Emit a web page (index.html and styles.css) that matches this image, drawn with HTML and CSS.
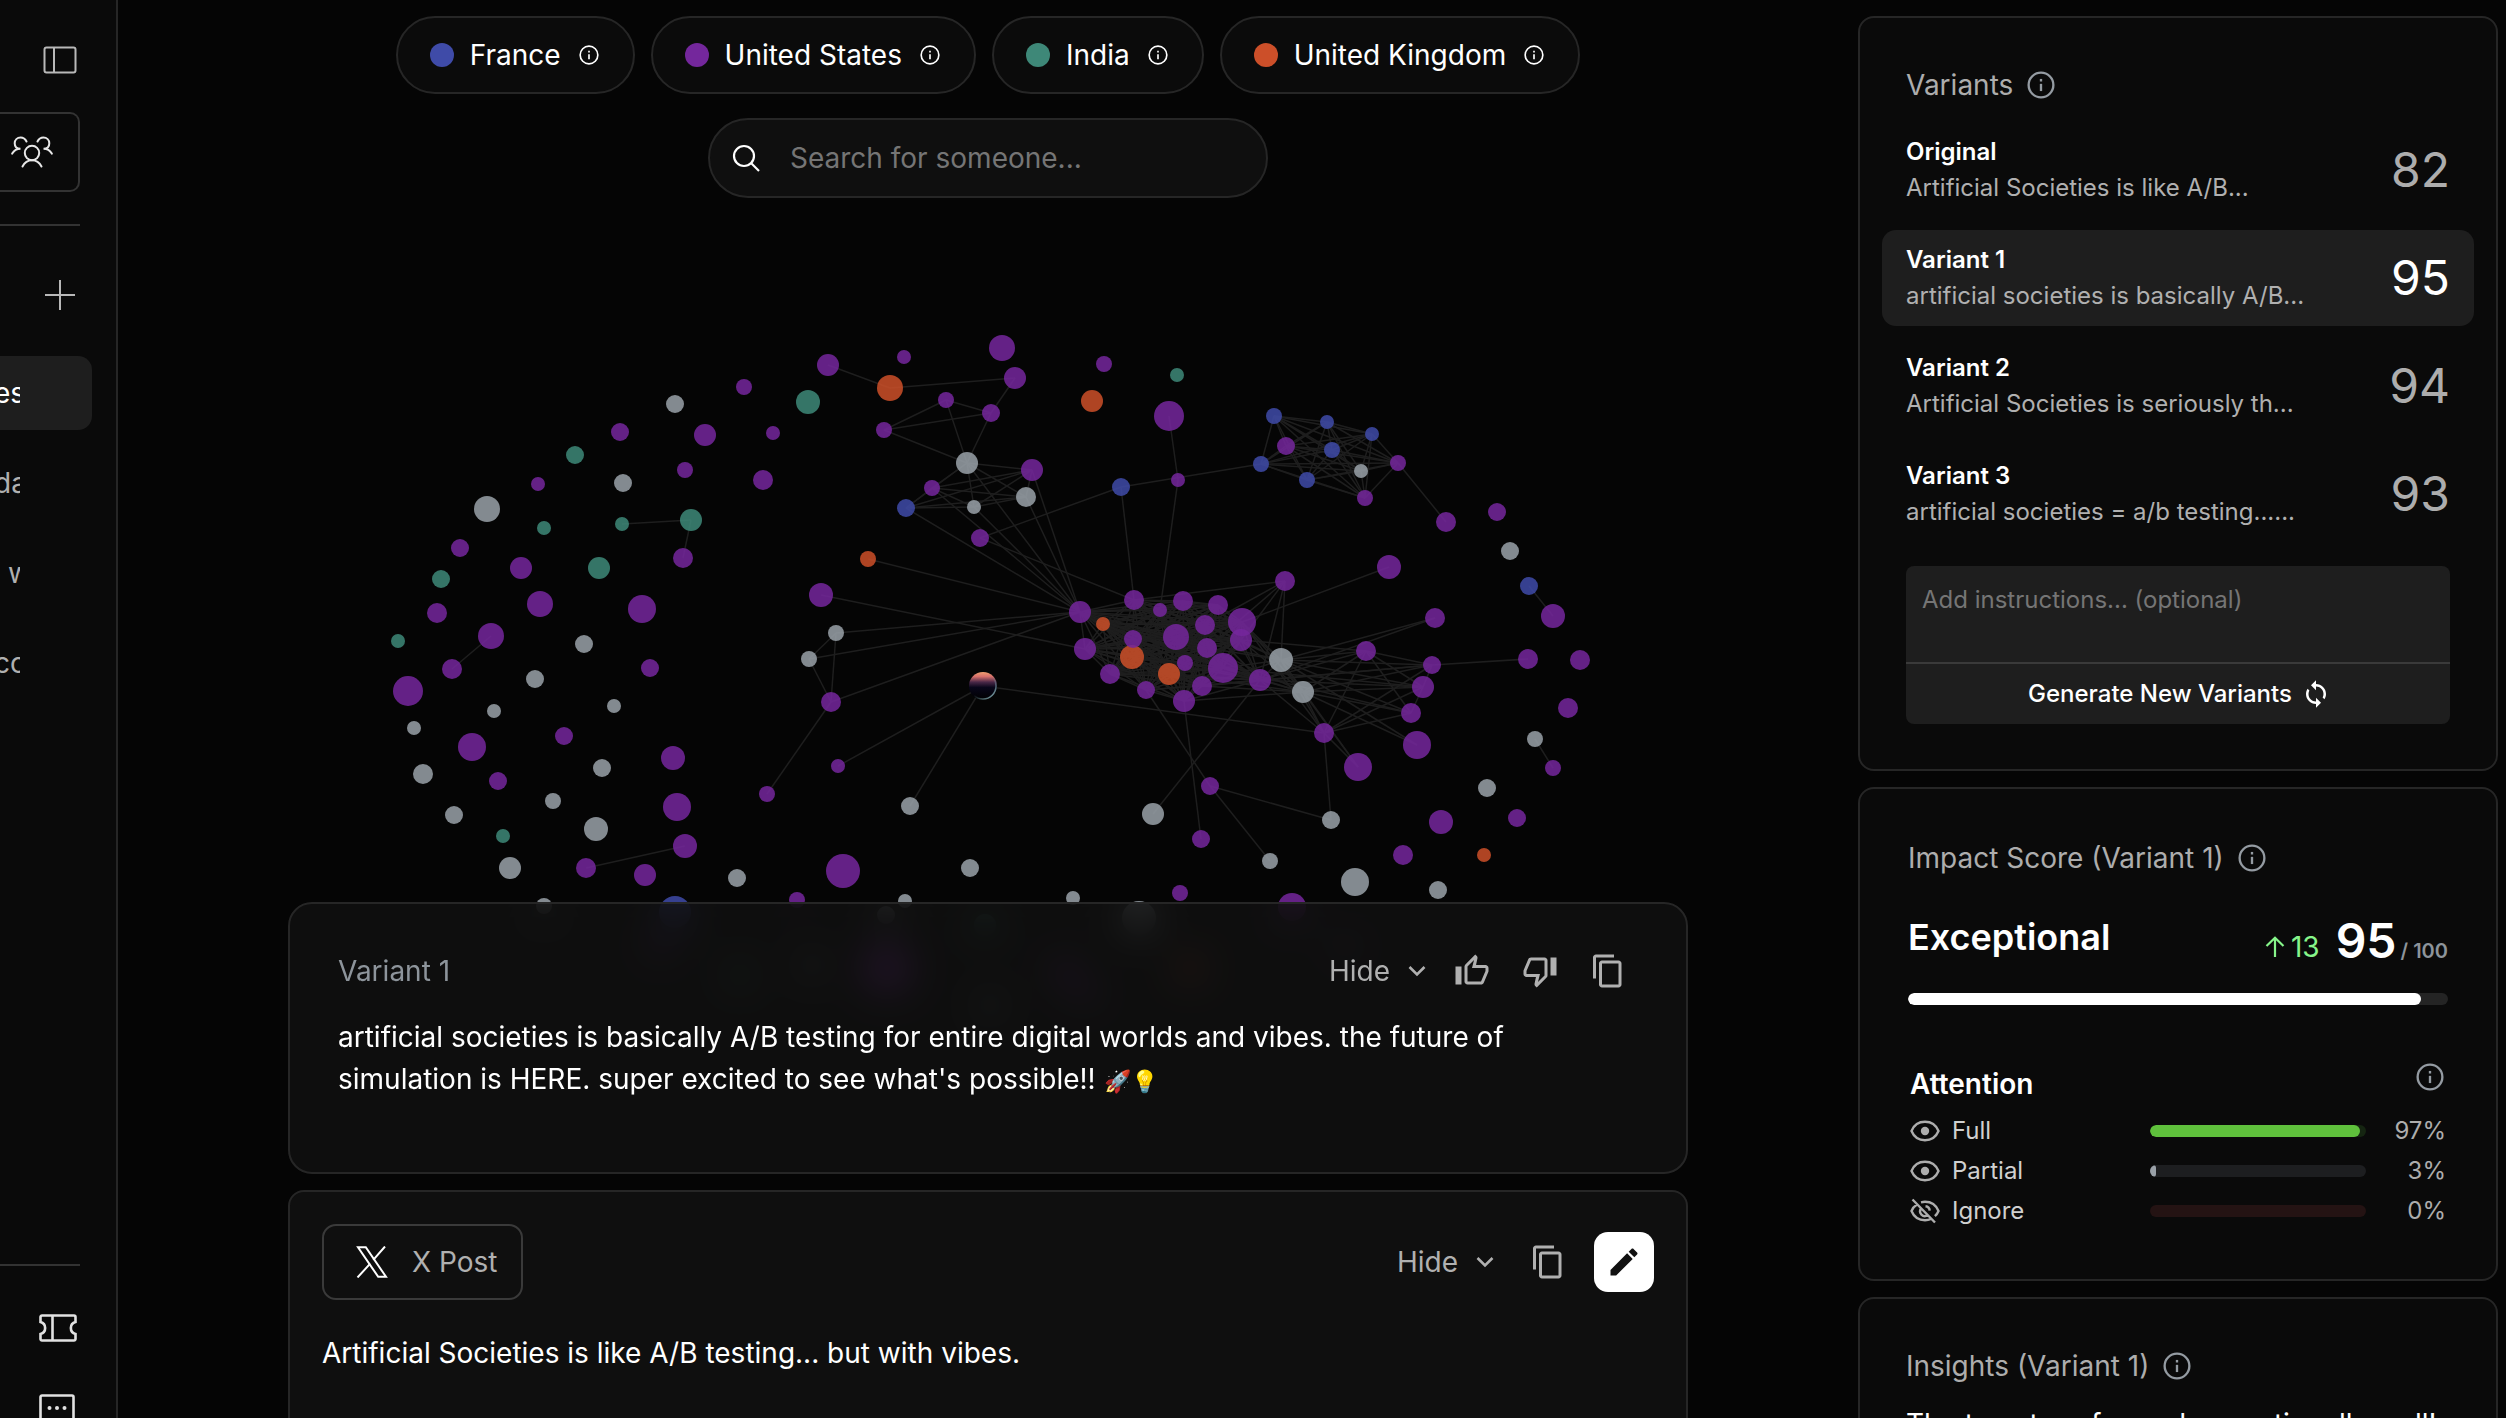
FILE: index.html
```html
<!DOCTYPE html>
<html lang="en">
<head>
<meta charset="utf-8">
<title>Artificial Societies</title>
<link rel="stylesheet" href="styles.css">
</head>
<body>
<svg class="defs" aria-hidden="true">
  <symbol id="info" viewBox="0 0 24 24"><circle cx="12" cy="12" r="10.6" fill="none" stroke="currentColor" stroke-width="2"/><path d="M12 11v6.2" stroke="currentColor" stroke-width="2"/><path d="M12 6.8v2.2" stroke="currentColor" stroke-width="2"/></symbol>
  <symbol id="copy" viewBox="0 0 24 24"><path fill="currentColor" d="M16 1H4c-1.100 0-2 .9-2 2v14h2V3h12V1zm3 4H8c-1.100 0-2 .9-2 2v14c0 1.100.9 2 2 2h11c1.100 0 2-.9 2-2V7c0-1.100-.9-2-2-2zm0 16H8V7h11v14z"/></symbol>
  <symbol id="chevron" viewBox="0 0 18 12"><path d="M1.500 2l7.500 7.500L16.500 2" fill="none" stroke="currentColor" stroke-width="2.600"/></symbol>
  <symbol id="eye" viewBox="0 0 30 22"><path d="M1.500 11C4 5 9 1.800 15 1.800S26 5 28.500 11C26 17 21 20.200 15 20.200S4 17 1.500 11z" fill="none" stroke="currentColor" stroke-width="2.400"/><circle cx="15" cy="11" r="4.200" fill="currentColor"/></symbol>
  <symbol id="eye-off" viewBox="0 0 30 26"><path d="M7 6.500C4.500 8 2.600 10.300 1.500 13c2.500 6 7.500 9.200 13.500 9.200 2.200 0 4.300-.5 6.200-1.300M11 4.300c1.300-.3 2.600-.5 4-.5 6 0 11 3.200 13.500 9.200-.8 2-2 3.700-3.600 5.100M11 10.500a4.800 4.800 0 0 0 6.500 6.800M15.500 8.300a4.800 4.800 0 0 1 4.200 4.400M2.500 1.500l22.500 23" fill="none" stroke="currentColor" stroke-width="2.400"/></symbol>
</svg>
<div class="app">
  <nav class="sidebar" aria-label="Simulations">
    <button class="side-btn collapse" aria-label="Toggle sidebar"><svg width="34" height="28" viewBox="0 0 34 28"><rect x="1.500" y="1.500" width="31" height="25" rx="2" fill="none" stroke="currentColor" stroke-width="2"/><path d="M11 2v24" stroke="currentColor" stroke-width="2"/></svg></button>
    <button class="society" aria-label="Society"><svg width="42" height="32" viewBox="0 0 42 32" fill="none" stroke="currentColor" stroke-width="2" stroke-linecap="round"><circle cx="21" cy="17" r="7.200"/><path d="M11.500 30.500c2-4 5.300-6.200 9.500-6.200s7.500 2.200 9.500 6.200"/><path d="M15.500 5.500C14.300 3 12.200 1.500 9.600 1.500 6.200 1.500 3.700 4 3.700 7.200s2 5.600 5.800 5.600C6 12.800 3 14.500 1.200 17.600"/><path d="M26.500 5.500c1.200-2.500 3.300-4 5.900-4 3.400 0 5.900 2.500 5.900 5.700s-2 5.600-5.800 5.600c3.500 0 6.500 1.700 8.300 4.800"/></svg></button>
    <hr>
    <button class="side-btn add" aria-label="New simulation"><svg width="30" height="30" viewBox="0 0 30 30"><path d="M15 0v30M0 15h30" stroke="currentColor" stroke-width="2"/></svg></button>
    <ul class="history">
      <li><a class="active" href="#"><span>es</span></a></li>
      <li><a href="#"><span>da</span></a></li>
      <li><a class="shift" href="#"><span>w</span></a></li>
      <li><a href="#"><span>co</span></a></li>
    </ul>
    <div class="side-foot">
      <hr>
      <button class="side-btn" aria-label="Tickets"><svg width="38" height="28" viewBox="0 0 38 28" fill="none" stroke="currentColor" stroke-width="2.600"><path d="M3 1.500h32a1.500 1.500 0 0 1 1.500 1.500v5a6.200 6.200 0 0 0 0 12v5a1.500 1.500 0 0 1-1.500 1.500H3A1.500 1.500 0 0 1 1.500 25v-5a6.200 6.200 0 0 0 0-12V3A1.500 1.500 0 0 1 3 1.500z"/><path d="M13.500 2v24"/></svg></button>
      <button class="side-btn" aria-label="Feedback"><svg width="36" height="36" viewBox="0 0 36 36"><path d="M1.500 34V3A1.500 1.500 0 0 1 3 1.500h30A1.500 1.500 0 0 1 34.500 3v26H7z" fill="none" stroke="currentColor" stroke-width="2.600"/><g fill="currentColor"><circle cx="10.500" cy="14" r="2"/><circle cx="18" cy="14" r="2"/><circle cx="25.500" cy="14" r="2"/></g></svg></button>
    </div>
  </nav>

  <main class="main">
    <svg class="graph" id="graph" viewBox="118 0 1740 1418" preserveAspectRatio="xMidYMin meet" role="img" aria-label="Society network">
      <defs>
        <linearGradient id="sunrise" x1="0" y1="0" x2="0" y2="1"><stop offset="0" stop-color="#f0a070"/><stop offset=".16" stop-color="#d8716c"/><stop offset=".36" stop-color="#4a2848"/><stop offset=".55" stop-color="#08061a"/><stop offset="1" stop-color="#000"/></linearGradient>
        <linearGradient id="rim" x1="0" y1="0" x2="1" y2="1"><stop offset=".5" stop-color="#7fb2b8" stop-opacity="0"/><stop offset="1" stop-color="#9cc4cc"/></linearGradient>
      </defs>
    </svg>
    <div class="legend">
      <button class="pill"><i class="dot blue"></i>France<svg class="i20"><use href="#info"/></svg></button>
      <button class="pill"><i class="dot purple"></i>United States<svg class="i20"><use href="#info"/></svg></button>
      <button class="pill"><i class="dot teal"></i>India<svg class="i20"><use href="#info"/></svg></button>
      <button class="pill"><i class="dot orange"></i>United Kingdom<svg class="i20"><use href="#info"/></svg></button>
    </div>
    <label class="search"><svg width="28" height="28" viewBox="0 0 28 28" fill="none" stroke="currentColor" stroke-width="2.200"><circle cx="12" cy="12" r="10"/><path d="M19 19l8 8"/></svg><input type="search" placeholder="Search for someone..." aria-label="Search for someone"></label>

    <div class="panels">
      <section class="panel result">
        <header>
          <h2>Variant 1</h2>
          <button class="hide">Hide<svg class="chev"><use href="#chevron"/></svg></button>
          <button class="icon" aria-label="Like"><svg viewBox="0 0 24 24"><path fill="currentColor" d="M9 21h9c.83 0 1.540-.5 1.840-1.220l3.020-7.050c.09-.23.140-.47.140-.73v-2c0-1.100-.9-2-2-2h-6.310l.95-4.570.03-.32c0-.41-.17-.79-.44-1.060L14.170 1 7.580 7.590C7.220 7.950 7 8.450 7 9v10c0 1.100.9 2 2 2zM9 9l4.340-4.340L12 10h9v2l-3 7H9V9zM1 9h4v12H1z"/></svg></button>
          <button class="icon" aria-label="Dislike"><svg viewBox="0 0 24 24"><path fill="currentColor" d="M15 3H6c-.83 0-1.540.5-1.840 1.220l-3.020 7.050c-.09.23-.14.47-.14.73v2c0 1.100.9 2 2 2h6.310l-.95 4.570-.03.32c0 .41.17.79.44 1.060L9.830 23l6.590-6.590c.36-.36.58-.86.58-1.410V5c0-1.100-.9-2-2-2zm0 12l-4.340 4.340L12 14H3v-2l3-7h9v10zm4-12h4v12h-4z"/></svg></button>
          <button class="icon" aria-label="Copy variant"><svg><use href="#copy"/></svg></button>
        </header>
        <p>artificial societies is basically A/B testing for entire digital worlds and vibes. the future of simulation is HERE. super excited to see what's possible!! <span class="emoji">🚀💡</span></p>
      </section>
      <section class="panel post">
        <header>
          <button class="kind"><svg width="32" height="32" viewBox="0 0 32 32" fill="none" stroke="currentColor" stroke-width="2"><path d="M2 1.200h7.800L30 30.800h-7.800z"/><path d="M29 .5L17.300 13.800M14.200 17.600L1.500 31.500"/></svg>X Post</button>
          <button class="hide">Hide<svg class="chev"><use href="#chevron"/></svg></button>
          <button class="icon" aria-label="Copy post"><svg><use href="#copy"/></svg></button>
          <button class="edit" aria-label="Edit post"><svg width="36" height="36" viewBox="0 0 24 24"><path fill="currentColor" d="M3 17.250V21h3.750L17.810 9.940l-3.750-3.750L3 17.250zM20.710 7.040c.39-.39.39-1.020 0-1.410l-2.340-2.340c-.39-.39-1.020-.39-1.410 0l-1.830 1.830 3.750 3.750 1.830-1.830z"/></svg></button>
        </header>
        <p>Artificial Societies is like A/B testing... but with vibes.</p>
      </section>
    </div>
  </main>

  <aside class="side">
    <section class="card variants">
      <h2>Variants<svg class="i28"><use href="#info"/></svg></h2>
      <button class="variant"><span class="name">Original</span><span class="score">82</span><span class="text">Artificial Societies is like A/B...</span></button>
      <button class="variant selected"><span class="name">Variant 1</span><span class="score">95</span><span class="text">artificial societies is basically A/B...</span></button>
      <button class="variant"><span class="name">Variant 2</span><span class="score">94</span><span class="text">Artificial Societies is seriously th...</span></button>
      <button class="variant"><span class="name">Variant 3</span><span class="score">93</span><span class="text">artificial societies = a/b testing......</span></button>
      <div class="compose">
        <textarea placeholder="Add instructions... (optional)" aria-label="Instructions"></textarea>
        <button class="generate">Generate New Variants<svg width="24" height="28" viewBox="0 0 24 26"><path fill="currentColor" d="M12 4V1L8 5l4 4V6c3.310 0 6 2.690 6 6 0 1.010-.25 1.970-.7 2.800l1.460 1.460C19.540 15.030 20 13.570 20 12c0-4.420-3.580-8-8-8zm0 14c-3.310 0-6-2.690-6-6 0-1.010.25-1.970.7-2.800L5.240 7.740C4.460 8.970 4 10.430 4 12c0 4.420 3.580 8 8 8v3l4-4-4-4v3z" transform="translate(-3 -2) scale(1.250)"/></svg></button>
      </div>
    </section>

    <section class="card impact">
      <h2>Impact Score (Variant 1)<svg class="i28"><use href="#info"/></svg></h2>
      <div class="rating">
        <strong class="word">Exceptional</strong>
        <div class="numbers">
          <span class="delta"><svg width="20" height="22" viewBox="0 0 20 22"><path d="M10 21V2M1.500 10L10 1.800l8.500 8.200" fill="none" stroke="currentColor" stroke-width="2.200"/></svg>13</span>
          <strong class="big">95</strong><span class="of">/ 100</span>
        </div>
      </div>
      <div class="bar total"><i style="width:95%"></i></div>
      <div class="att-head"><h3>Attention</h3><svg class="i28"><use href="#info"/></svg></div>
      <table class="attention">
        <tr><th><svg width="30" height="22"><use href="#eye"/></svg>Full</th><td><div class="bar full"><i style="width:97%"></i></div></td><td class="pct">97%</td></tr>
        <tr><th><svg width="30" height="22"><use href="#eye"/></svg>Partial</th><td><div class="bar partial"><i style="width:3%"></i></div></td><td class="pct">3%</td></tr>
        <tr><th><svg width="30" height="26"><use href="#eye-off"/></svg>Ignore</th><td><div class="bar ignore"><i style="width:0%"></i></div></td><td class="pct">0%</td></tr>
      </table>
    </section>

    <section class="card insights">
      <h2>Insights (Variant 1)<svg class="i28"><use href="#info"/></svg></h2>
      <p>The tweet performed exceptionally well!</p>
    </section>
  </aside>
</div>
<script src="graph.js"></script>
</body>
</html>
```
FILE: styles.css
```css
* { box-sizing: border-box; }
body {
  margin: 0;
  background: #050505;
  color: #fff;
  font: 400 28px/42px Inter, "Noto Sans", sans-serif;
  overflow: hidden;
}
button, input, textarea { font: inherit; color: inherit; background: none; border: 0; padding: 0; margin: 0; outline: 0; }
button { cursor: pointer; }
h2, h3, p, ul { margin: 0; padding: 0; font-size: inherit; font-weight: 400; list-style: none; }
svg { display: block; flex: none; }
.defs { position: absolute; width: 0; height: 0; }
.i20 { width: 20px; height: 20px; margin: 0 2px; }
.i28 { width: 28px; height: 28px; color: #949ba2; }

.app { display: grid; grid-template-columns: 118px minmax(0, 1fr) 648px; height: 100vh; }

/* Sidebar */
.sidebar {
  display: flex; flex-direction: column; align-items: flex-start;
  background: #0a0a0a; border-right: 2px solid #262626; overflow: hidden; padding-top: 46px;
}
.sidebar hr { width: 80px; height: 2px; margin: 0; border: 0; background: #333; flex: none; }
.side-btn { color: #b8b8b8; }
.collapse { margin-left: 43px; }
.society {
  width: 80px; height: 80px; margin: 38px 0 32px; padding-left: 11px; color: #e8e8e8;
  border: 2px solid #333; border-left: 0; border-radius: 0 10px 10px 0;
}
.add { margin: 54px 0 46px 45px; }
.history { display: flex; flex-direction: column; gap: 16px; }
.history a {
  display: flex; align-items: center; width: 92px; height: 74px;
  color: #b0b0b0; text-decoration: none; border-radius: 0 14px 14px 0;
}
.history span { width: 20px; overflow: hidden; white-space: nowrap; text-indent: -6px; }
.history .active { background: #1e1e1e; color: #fff; }
.history .shift { padding-left: 8px; }
.history .shift span { width: 12px; text-indent: 0; }
.side-foot { margin-top: auto; height: 154px; flex: none; }
.side-foot .side-btn { display: block; color: #e2e2e2; margin: 48px 0 0 39px; }
.side-foot .side-btn + .side-btn { margin-top: 52px; }

/* Main column */
.main { position: relative; display: flex; flex-direction: column; align-items: center; padding-top: 16px; overflow: hidden; }
.graph { position: absolute; inset: 0; width: 100%; height: 100%; }
.legend { position: relative; display: flex; gap: 16px; flex: none; }
.pill {
  display: flex; align-items: center; gap: 16px; height: 78px; padding: 0 32px;
  background: #0b0b0b; border: 2px solid #262626; border-radius: 39px;
}
.dot { width: 24px; height: 24px; border-radius: 50%; }
.blue { background: #3f4ba8; }
.purple { background: #74279c; }
.teal { background: #3e8878; }
.orange { background: #cc4f29; }
.search {
  position: relative; display: flex; align-items: center; gap: 30px; flex: none;
  width: 560px; height: 80px; margin-top: 24px; padding: 0 22px;
  background: #0f0f0f; border: 2px solid #262626; border-radius: 40px;
}
.search input { flex: 1; min-width: 0; }
::placeholder { color: #757575; opacity: 1; }

.panels { position: relative; flex: none; width: calc(100% - 64px); max-width: 1400px; margin-top: 704px; display: flex; flex-direction: column; gap: 16px; }
.panel { border: 2px solid #262626; background: #0f0f0f; flex: none; }
.panel header { display: flex; align-items: center; color: #b0b0b0; }
.hide { display: flex; align-items: center; gap: 18px; margin-left: auto; }
.chev { width: 18px; height: 12px; }
.icon { margin-left: 32px; }
.icon svg { width: 36px; height: 36px; }
.result {
  height: 272px; padding: 46px 60px 0 48px; border-radius: 24px;
  background: rgba(17, 17, 17, .84); backdrop-filter: blur(18px);
}
.result h2 { color: #8d949b; }
.result .hide + .icon { margin-left: 28px; }
.result p { margin-top: 24px; padding-right: 60px; }
.emoji { font-size: 22px; }
.post { height: 300px; padding: 32px; border-radius: 16px; }
.post p { margin-top: 32px; }
.kind {
  display: flex; align-items: center; gap: 24px; height: 76px; padding: 0 24px 0 32px;
  border: 2px solid #3a3a3a; border-radius: 14px;
}
.kind svg { color: #fff; }
.post .icon { margin-left: 36px; }
.edit { display: grid; place-items: center; width: 60px; height: 60px; margin-left: 28px; background: #fff; color: #111; border-radius: 14px; }

/* Right column */
.side { display: flex; flex-direction: column; gap: 16px; padding: 16px 8px 0 0; overflow: hidden; }
.card { flex: none; padding: 0 46px; background: #0a0a0a; border: 2px solid #262626; border-radius: 16px; }
.card h2 { display: flex; align-items: center; gap: 14px; color: #adadad; }
.variants { height: 755px; padding-top: 46px; }
.variants h2 { margin-bottom: 16px; }
.variant {
  display: grid; grid-template-columns: 1fr auto; align-content: center; text-align: left;
  width: calc(100% + 48px); height: 96px; margin: 0 -24px 12px; padding: 0 24px;
  border-radius: 14px; font-size: 24px; line-height: 36px;
}
.name { font-weight: 600; }
.text { color: #b0b0b0; }
.score { grid-column: 2; grid-row: 1 / 3; align-self: center; font-size: 48px; color: #adadad; }
.selected { background: #1e1e1e; }
.selected .score { color: #fff; }
.compose { margin-top: 24px; background: #1e1e1e; border-radius: 8px; font-size: 24px; line-height: 36px; }
.compose textarea { display: block; width: 100%; height: 96px; padding: 16px; resize: none; }
.generate {
  display: flex; align-items: center; justify-content: center; gap: 12px;
  width: 100%; height: 62px; border-top: 2px solid #3a3a3a; font-weight: 500;
}
.impact { height: 494px; padding: 48px 48px 0; }
.rating { display: flex; align-items: center; justify-content: space-between; height: 60px; margin-top: 28px; }
.word { font-size: 36px; font-weight: 600; }
.numbers { display: flex; align-items: baseline; padding-top: 18px; }
.delta { display: flex; align-items: center; gap: 6px; color: #86f58a; }
.big { font-size: 48px; font-weight: 600; margin-left: 16px; }
.of { font-size: 20px; font-weight: 600; color: #8d949b; margin-left: 4px; }
.bar { height: 12px; border-radius: 6px; overflow: hidden; }
.bar i { display: block; height: 100%; border-radius: 6px; }
.total { background: #242424; margin-top: 26px; }
.total i { background: #fff; }
.att-head { display: flex; justify-content: space-between; margin-top: 58px; padding: 0 4px 0 2px; }
.att-head h3 { font-weight: 600; }
.attention { width: calc(100% - 2px); margin: 6px 0 0 2px; border-collapse: collapse; font-size: 24px; line-height: 40px; }
.attention th, .attention td { padding: 0; font-weight: 400; }
.attention th { display: flex; align-items: center; gap: 12px; color: #d0d0d0; }
.attention th svg { color: #adadad; }
.attention td { width: 216px; }
.attention .pct { width: 82px; padding-right: 2px; text-align: right; color: #adadad; }
.full { background: #152511; }
.full i { background: #5fc13c; }
.partial { background: #1d1e20; }
.partial i { background: #9aa1a8; }
.ignore { background: #241313; }
.insights { height: 400px; padding-top: 46px; }
.insights p { margin-top: 16px; }
```
FILE: graph.js
```js
const COLORS = { p: '#74279c', g: '#99a1a8', t: '#3e8878', o: '#cc4f29', b: '#3f4ba8' };

// Stand-alone people: colour, x, y, radius.
const loose = [
  ['p',744,387,8],['g',675,404,9],['p',620,432,9],['p',705,435,11],['p',773,433,7],['t',575,455,9],['p',538,484,7],
  ['p',685,470,8],['g',623,483,9],['p',763,480,10],['g',487,509,13],['t',544,528,7],['p',460,548,9],['p',521,568,11],
  ['t',599,568,11],['t',441,579,9],['p',540,604,13],['p',642,609,14],['p',437,613,10],['t',398,641,7],['g',584,644,9],
  ['p',650,668,9],['g',535,679,9],['p',408,691,15],['g',494,711,7],['g',614,706,7],['g',414,728,7],['p',472,747,14],
  ['p',564,736,9],['p',673,758,12],['g',602,768,9],['g',423,774,10],['p',498,781,9],['g',553,801,8],['p',677,807,14],
  ['g',454,815,9],['g',596,829,12],['t',503,836,7],['g',510,868,11],['p',645,875,11],['g',737,878,9],['g',544,906,8],
  ['b',675,912,16],['p',904,357,7],['p',1002,348,13],['t',808,402,12],['p',1104,364,8],['t',1177,375,7],['o',1092,401,11],
  ['p',843,871,17],['g',970,868,9],['p',797,900,8],['g',905,901,7],['g',1073,898,7],['p',1180,893,8],
  ['p',1497,512,9],['g',1510,551,9],['p',1580,660,10],['p',1568,708,10],['g',1487,788,9],['p',1517,818,9],['p',1441,822,12],
  ['p',1403,855,10],['o',1484,855,7],['g',1355,882,14],['g',1438,890,9],['p',1292,907,14],
  ['p',887,968,26],['g',1139,918,17],['g',886,915,9],['p',1345,945,8],['o',1190,968,12],['p',1065,972,12],['p',1085,992,10],
  ['g',812,965,9],['p',660,945,10],['t',740,975,10],['t',985,925,11],['g',990,1005,9]
];

// Connected people, addressed by key.
const linked = {
  l1:['t',622,524,7], l2:['t',691,520,11], l3:['p',683,558,10], l4:['p',491,636,13], l5:['p',452,669,10],
  l6:['p',586,868,10], l7:['p',685,846,12], l8:['p',767,794,8],
  m1:['p',828,365,11], m2:['o',890,388,13], m3:['p',1015,378,11], m4:['p',946,400,8], m5:['p',991,413,9], m6:['p',884,430,8],
  n1:['g',967,463,11], n2:['p',1032,470,11], n3:['p',932,488,8], n4:['g',1026,497,10], n5:['b',906,508,9], n6:['g',974,507,7],
  q1:['p',980,538,9], q2:['b',1121,487,9], q3:['p',1178,480,7], q4:['p',1169,416,15], q5:['o',868,559,8], q6:['p',821,595,12],
  r1:['g',836,633,8], r2:['g',809,659,8], r3:['p',831,702,10], r4:['p',838,766,7], r5:['g',910,806,9],
  u1:['g',1153,814,11], u2:['p',1201,839,9], u3:['p',1210,786,9], u4:['g',1331,820,9], u5:['g',1270,861,8],
  b1:['b',1274,416,8], b2:['b',1327,422,7], b3:['b',1372,434,7], b4:['p',1286,446,9], b5:['b',1332,450,8], b6:['b',1261,464,8],
  b7:['g',1361,471,7], b8:['p',1398,463,8], b9:['b',1307,480,8], b0:['p',1365,498,8], v1:['p',1446,522,10],
  a:['p',1080,612,11], c1:['p',1134,600,10], c2:['p',1160,610,7], c3:['p',1183,601,10], c4:['p',1218,605,10], c5:['p',1242,622,14],
  c6:['p',1241,640,11], c7:['p',1205,625,10], c8:['p',1176,637,13], c9:['p',1207,648,10], d0:['o',1103,624,7],
  d1:['o',1132,657,12], d2:['p',1133,639,9], d3:['p',1085,649,11], d4:['p',1110,674,10], d5:['o',1169,674,11], d6:['p',1185,663,8],
  d7:['p',1223,668,15], d8:['p',1202,686,10], d9:['p',1146,690,9], e0:['p',1184,701,11], e1:['p',1260,680,11],
  e2:['g',1281,660,12], e3:['g',1303,692,11], e4:['p',1285,581,10], f1:['p',1389,567,12], f2:['p',1435,618,10],
  f3:['p',1366,651,10], f4:['p',1432,665,9], f5:['p',1423,687,11], f6:['p',1411,713,10], f7:['p',1324,733,10],
  f8:['p',1417,745,14], f9:['p',1358,767,14], g1:['p',1528,659,10], g2:['b',1529,586,9], g3:['p',1553,616,12],
  h1:['g',1535,739,8], h2:['p',1553,768,8],
  s:['s',983,686,14]
};

// Groups in which everybody knows everybody.
const cliques = [
  'n1 n2 n3 n4 n5 n6',
  'b1 b2 b3 b4 b5 b6 b7 b8 b9 b0',
  'c1 c2 c3 c4 c5 c6 c7 c8 c9 d0 d1 d2 d3 d4 d5 d6 d7 d8 d9 e0 e1 a'
];

const pairs = 'l1-l2 l2-l3 l4-l5 l6-l7 l8-r3 m1-m2 m2-m3 m3-m5 m4-m5 m4-m6 m5-m6 m4-n1 m5-n1 m6-n1 ' +
  'a-n1 a-n2 a-n3 a-n4 a-n5 a-n6 q1-q2 q1-c1 q2-b6 q2-c1 q4-q3 q3-c2 q5-a q6-d3 r1-a r2-a r3-a r1-r2 r2-r3 r1-r3 ' +
  's-r4 s-r5 s-f7 d9-u3 e0-u2 u1-e1 u3-u4 u3-u5 f7-u4 b8-v1 ' +
  'e2-c4 e2-c5 e2-c6 e2-c7 e2-c9 e2-d7 e2-d8 e2-c8 e2-e1 e2-e3 e2-e4 e2-f2 e2-f3 e2-f4 e2-f5 e2-f6 e2-f7 ' +
  'e3-e1 e3-d7 e3-d8 e3-e0 e3-c5 e3-c6 e3-c9 e3-d5 e3-f3 e3-f4 e3-f5 e3-f6 e3-f7 e3-f8 e3-f9 ' +
  'e1-f3 e1-f4 e1-f5 e1-f7 e1-f2 e1-e4 e4-c1 e4-c7 e4-c9 e4-c6 f1-c5 c6-f3 f3-f4 f3-f6 f3-f7 f3-f5 ' +
  'f7-f4 f7-f5 f7-f6 f7-f9 f5-f4 f5-f6 d7-f6 d7-f5 c5-f7 e2-f8 e2-f9 d8-f4 g1-f4 g2-g3 h1-h2';

const NS = 'http://www.w3.org/2000/svg';
const svg = document.getElementById('graph');
const make = (tag, attrs) => {
  const el = document.createElementNS(NS, tag);
  for (const k in attrs) el.setAttribute(k, attrs[k]);
  svg.appendChild(el);
};

const edge = (a, b) => make('line', {
  x1: linked[a][1], y1: linked[a][2], x2: linked[b][1], y2: linked[b][2],
  stroke: '#1e1e1e', 'stroke-width': 1.5
});
cliques.forEach(group => {
  const keys = group.split(' ');
  keys.forEach((a, i) => keys.slice(i + 1).forEach(b => edge(a, b)));
});
pairs.split(' ').forEach(pair => { const [a, b] = pair.split('-'); edge(a, b); });

[...loose, ...Object.values(linked)].forEach(([c, x, y, r]) => {
  if (c === 's') {
    make('circle', { cx: x, cy: y, r, fill: 'url(#sunrise)' });
    make('circle', { cx: x, cy: y, r: r - 1, fill: 'none', stroke: 'url(#rim)', 'stroke-width': 1.5 });
  } else {
    make('circle', { cx: x, cy: y, r, fill: COLORS[c], 'fill-opacity': .86 });
  }
});
```
